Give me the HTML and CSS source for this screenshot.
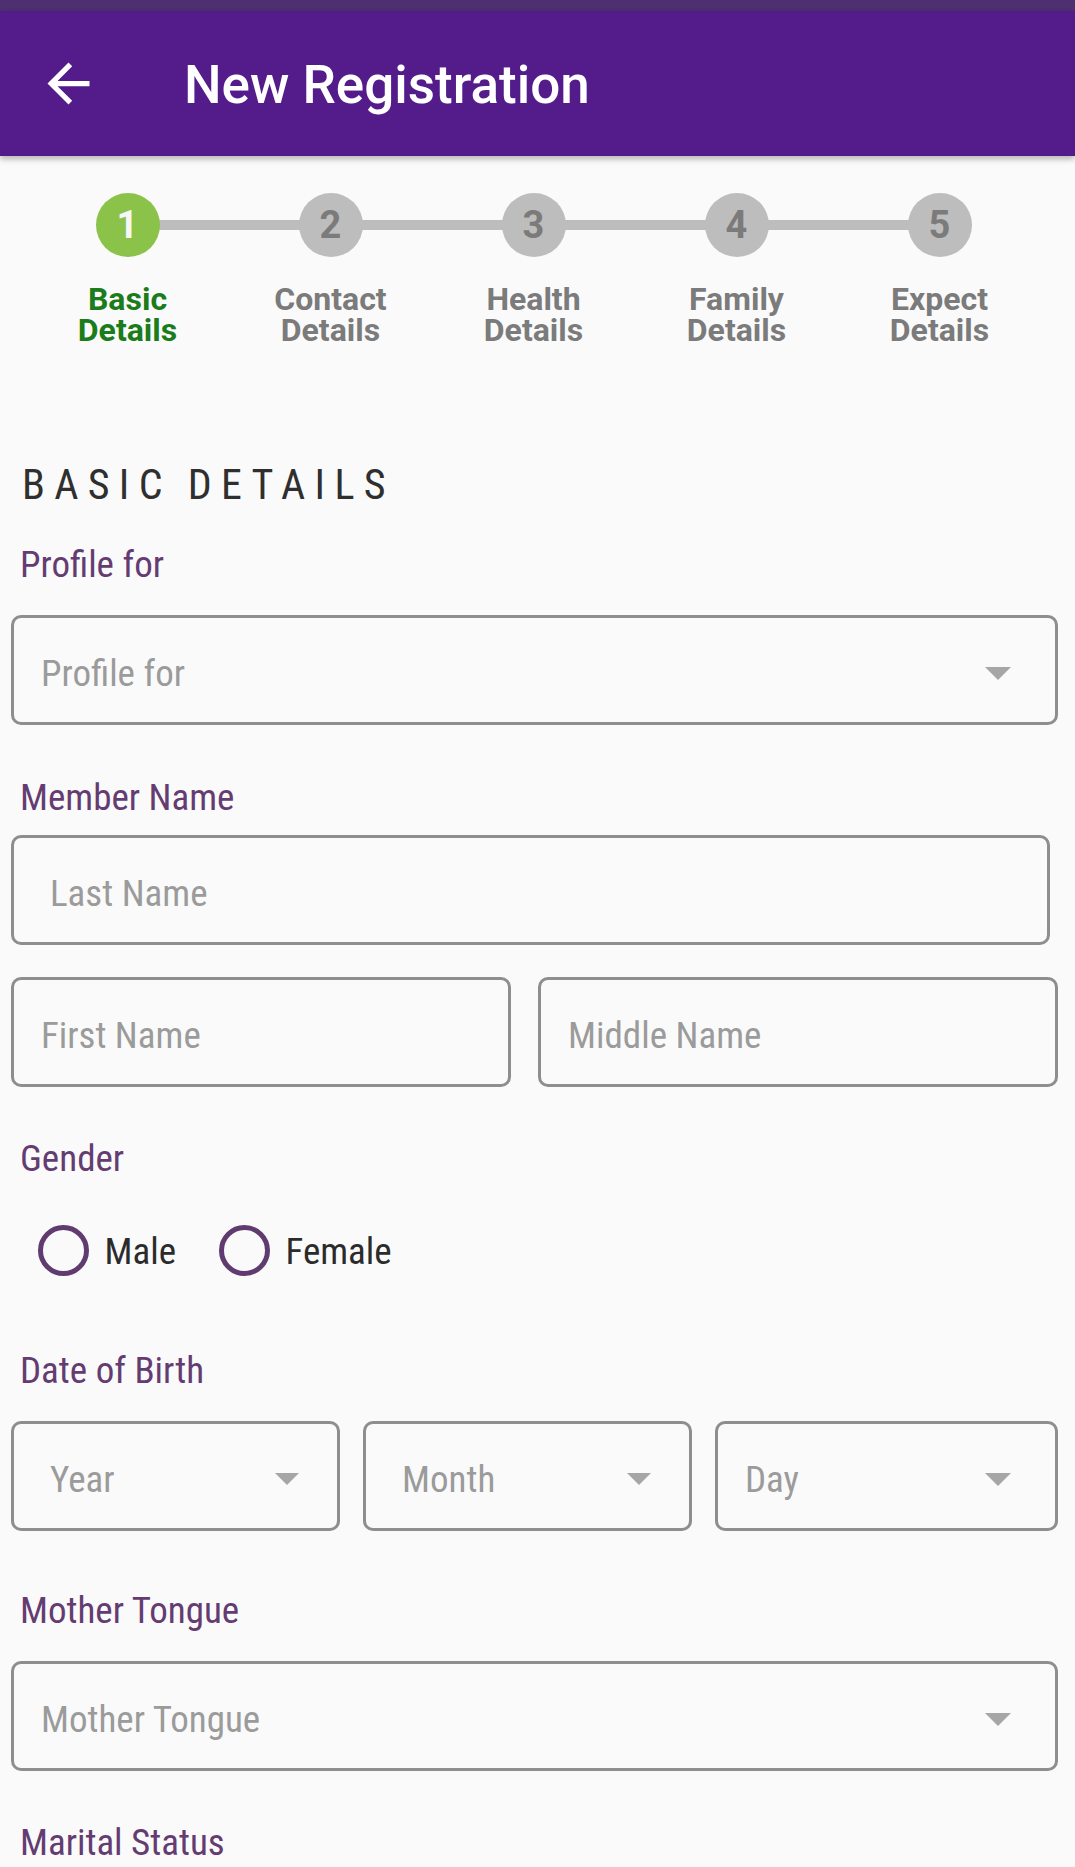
FILE: index.html
```html
<!DOCTYPE html>
<html lang="en">
<head>
<meta charset="utf-8">
<title>New Registration</title>
<link rel="stylesheet" href="styles.css">
</head>
<body>
<div class="status"></div>
<header class="appbar">
  <svg class="back" viewBox="0 0 24 24" aria-hidden="true"><path d="M20 11H7.83l5.59-5.59L12 4l-8 8 8 8 1.41-1.41L7.83 13H20v-2z"/></svg>
  <h1 class="title">New Registration</h1>
</header>

<ol class="stepper">
  <li class="step active"><span class="dot">1</span><span class="step-label"><span class="sl">Basic</span><span class="sl">Details</span></span></li>
  <li class="step"><span class="dot">2</span><span class="step-label"><span class="sl">Contact</span><span class="sl">Details</span></span></li>
  <li class="step"><span class="dot">3</span><span class="step-label"><span class="sl">Health</span><span class="sl">Details</span></span></li>
  <li class="step"><span class="dot">4</span><span class="step-label"><span class="sl">Family</span><span class="sl">Details</span></span></li>
  <li class="step"><span class="dot">5</span><span class="step-label"><span class="sl">Expect</span><span class="sl">Details</span></span></li>
</ol>

<main class="form">
  <h2 class="section-title">BASIC DETAILS</h2>

  <div class="field field-first">
    <div class="label">Profile for</div>
    <div class="box select pad-s"><span class="ph">Profile for</span><span class="caret"></span></div>
  </div>

  <div class="field">
    <div class="label label-tight">Member Name</div>
    <div class="box box-last pad-l"><span class="ph">Last Name</span></div>
    <div class="name-row">
      <div class="box pad-s"><span class="ph">First Name</span></div>
      <div class="box pad-s"><span class="ph">Middle Name</span></div>
    </div>
  </div>

  <div class="field field-gender">
    <div class="label label-radio">Gender</div>
    <div class="radios">
      <div class="radio radio-first"><span class="ring"></span><span class="radio-text">Male</span></div>
      <div class="radio"><span class="ring"></span><span class="radio-text">Female</span></div>
    </div>
  </div>

  <div class="field field-dob">
    <div class="label">Date of Birth</div>
    <div class="dob-row">
      <div class="box select pad-l pr-s"><span class="ph">Year</span><span class="caret caret-s"></span></div>
      <div class="box select pad-l pr-s"><span class="ph">Month</span><span class="caret caret-s"></span></div>
      <div class="box select pad-s"><span class="ph">Day</span><span class="caret"></span></div>
    </div>
  </div>

  <div class="field field-mt">
    <div class="label">Mother Tongue</div>
    <div class="box select pad-s"><span class="ph">Mother Tongue</span><span class="caret"></span></div>
  </div>

  <div class="field field-last">
    <div class="label">Marital Status</div>
  </div>
</main>
</body>
</html>
```

FILE: styles.css
```css
* { box-sizing: border-box; }

html, body {
  margin: 0;
  padding: 0;
  background: #fafafa;
  font-family: Roboto, "Noto Sans", "Liberation Sans", sans-serif;
  overflow: hidden;
}

body { height: 1867px; }

.status {
  height: 11px;
  background: #4e2f70;
}

.appbar {
  position: relative;
  z-index: 2;
  height: 145px;
  background: #541b8b;
  display: flex;
  align-items: center;
  padding-left: 37px;
  box-shadow: 0 3px 6px rgba(0, 0, 0, 0.28);
}

.back {
  width: 63px;
  height: 63px;
  fill: #ffffff;
  flex: none;
}

.title {
  margin: 2px 0 0 84px;
  color: #ffffff;
  font-size: 53px;
  font-weight: 500;
  line-height: 62px;
}

/* stepper */
.stepper {
  list-style: none;
  margin: 37px 0 0;
  padding: 0 0 0 26px;
  display: flex;
}

.step {
  position: relative;
  width: 203px;
  display: flex;
  flex-direction: column;
  align-items: center;
}

.step:not(:last-child)::before {
  content: "";
  position: absolute;
  top: 27px;
  left: 50%;
  width: 100%;
  height: 10px;
  background: #bdbdbd;
}

.dot {
  position: relative;
  z-index: 1;
  width: 64px;
  height: 64px;
  border-radius: 50%;
  background: #bdbdbd;
  color: #7b7b7b;
  font-size: 38px;
  font-weight: 700;
  line-height: 64px;
  text-align: center;
}

.step.active .dot {
  background: #8bc34a;
  color: #f7f7f7;
}

.step-label {
  margin-top: 27px;
  display: flex;
  flex-direction: column;
  align-items: center;
  color: #7b7b7b;
}

.sl {
  display: block;
  font-size: 32px;
  font-weight: 700;
  line-height: 31px;
  height: 31px;
  white-space: nowrap;
}

.step.active .step-label { color: #1b7c1b; }

/* form */
.form {
  padding: 0 17px 0 11px;
}

.section-title,
.label,
.ph,
.radio-text {
  font-family: "Roboto Condensed", Roboto, "Liberation Sans Narrow", sans-serif;
  font-stretch: 85%;
}

.section-title {
  margin: 114px 0 0;
  padding-left: 11px;
  font-size: 42px;
  font-weight: 400;
  line-height: 50px;
  letter-spacing: 9.3px;
  word-spacing: -3px;
  color: #2f2f2f;
}

.field { margin-top: 51px; }
.field-first { margin-top: 33px; }
.field-gender { margin-top: 50px; }
.field-dob { margin-top: 69px; }
.field-mt { margin-top: 58px; }
.field-last { margin-top: 50px; }

.label {
  padding-left: 9px;
  margin-bottom: 28px;
  font-size: 37px;
  line-height: 44px;
  color: #643c72;
}

.label-tight { margin-bottom: 15px; }
.label-radio { margin-bottom: 39px; }

.box {
  height: 110px;
  border: 3px solid #8e8e8e;
  border-radius: 10px;
  display: flex;
  align-items: center;
  padding-top: 8px;
  padding-right: 44px;
}

.pad-s { padding-left: 27px; }
.pad-l { padding-left: 36px; }
.pr-s { padding-right: 38px; }

.box-last { margin-right: 8px; }

.ph {
  flex: 1;
  font-size: 37px;
  line-height: 44px;
  color: #9b9b9b;
}

.caret {
  flex: none;
  width: 0;
  height: 0;
  border-left: 13px solid transparent;
  border-right: 13px solid transparent;
  border-top: 13px solid #a6a6a6;
  margin-bottom: 2px;
}

.caret-s {
  border-left-width: 12px;
  border-right-width: 12px;
  border-top-width: 12px;
}

.name-row {
  display: grid;
  grid-template-columns: 500px 1fr;
  column-gap: 27px;
  margin-top: 32px;
}

.dob-row {
  display: grid;
  grid-template-columns: 329px 329px 1fr;
  column-gap: 23px;
}

/* radios */
.radios {
  display: flex;
  align-items: center;
  height: 60px;
  padding-left: 26.5px;
}

.radio {
  display: flex;
  align-items: center;
  gap: 16px;
}

.radio-first { width: 181px; flex: none; }

.ring {
  width: 51px;
  height: 51px;
  border: 5px solid #5f3b6f;
  border-radius: 50%;
  flex: none;
}

.radio-text {
  font-size: 37px;
  line-height: 44px;
  color: #2b2b2b;
  padding-top: 4px;
}
```
